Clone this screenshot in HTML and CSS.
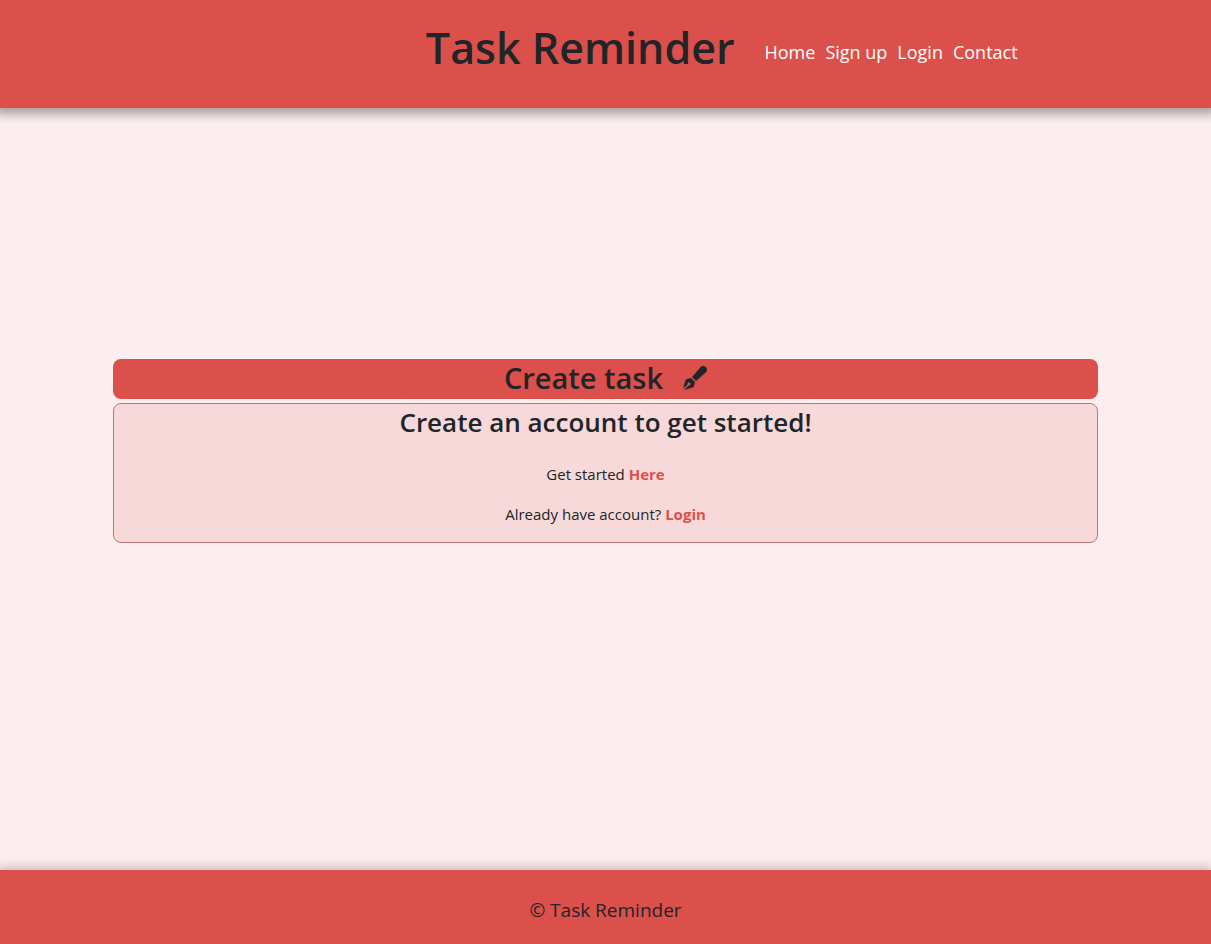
FILE: index.html
```html
<!DOCTYPE html>
<html lang="en">
<head>
<meta charset="utf-8">
<title>Task Reminder</title>
<link rel="stylesheet" href="styles.css">
</head>
<body>
<header class="site-header">
  <h1 class="site-title">Task Reminder</h1>
  <nav class="site-nav">
    <a href="#home">Home</a>
    <a href="#signup">Sign up</a>
    <a href="#login">Login</a>
    <a href="#contact">Contact</a>
  </nav>
</header>
<main class="content">
  <h2 class="task-heading">Create task
    <svg class="pen" viewBox="0 0 512 512" aria-hidden="true"><path fill="currentColor" d="M373.5 27.1C388.5 9.9 410.2 0 433 0c43.6 0 79 35.4 79 79c0 22.8-9.9 44.6-27.1 59.6L277.7 319l-10.3-10.3-64-64L193 234.3 373.5 27.1zM170.3 256.9l10.4 10.4 64 64 10.4 10.4-19.2 83.4c-3.9 17.1-16.9 30.7-33.8 35.4L24.4 510.3l95.4-95.4c2.6 .7 5.4 1.1 8.3 1.1c17.7 0 32-14.3 32-32s-14.3-32-32-32s-32 14.3-32 32c0 2.9 .4 5.6 1.1 8.3L1.7 487.6 51.5 310c4.7-16.9 18.3-29.9 35.4-33.8l83.4-19.2z"/></svg>
  </h2>
  <section class="card">
    <h3 class="card-title">Create an account to get started!</h3>
    <p class="card-text">Get started <a class="accent" href="#signup">Here</a></p>
    <p class="card-text">Already have account? <a class="accent" href="#login">Login</a></p>
  </section>
</main>
<footer class="site-footer">
  <p class="copyright">© Task Reminder</p>
</footer>
</body>
</html>
```
FILE: styles.css
```css
* { box-sizing: border-box; }

body {
  margin: 0;
  min-height: 100vh;
  display: flex;
  flex-direction: column;
  background: #fceeee;
  color: #212529;
  font: 400 15px/24px "Segoe UI", "Open Sans", "Noto Sans", sans-serif;
}

h1, h2, h3, p { margin: 0; }

a { text-decoration: none; }

.site-header {
  display: flex;
  gap: 30px;
  padding: 19px 0 31px 35%;
  background: #db504a;
  box-shadow: 0 0 10px 6px rgba(0, 0, 0, 0.34);
}

.site-title {
  padding-left: 2px;
  font-size: 43px;
  font-weight: 600;
  line-height: 58px;
}

.site-nav {
  display: flex;
  align-items: center;
  gap: 10px;
  padding-top: 8px;
  font-size: 18px;
}

.site-nav a { color: #fff; }

.content {
  flex: 1;
  display: flex;
  flex-direction: column;
  justify-content: center;
  gap: 4px;
  padding: 0 113px 76px;
  text-align: center;
}

.task-heading {
  display: flex;
  justify-content: center;
  align-items: center;
  gap: 20px;
  height: 40px;
  padding-bottom: 2px;
  border-radius: 8px;
  background: #db504a;
  font-size: 29px;
  font-weight: 600;
  line-height: 36px;
}

.pen {
  width: 24px;
  height: 24px;
}

.card {
  padding: 2px 0 16px;
  border: 1px solid #b97676;
  border-radius: 8px;
  background: #f7d9d9;
}

.card-title {
  margin-bottom: 23px;
  font-size: 26px;
  font-weight: 600;
  line-height: 33px;
}

.card-text + .card-text { margin-top: 16px; }

.accent {
  color: #db504a;
  font-weight: 700;
}

.site-footer {
  padding: 25px 0 19px;
  background: #db504a;
  box-shadow: 0 3px 12px 3px rgba(0, 0, 0, 0.34);
  text-align: center;
}

.copyright {
  font-size: 19px;
  line-height: 30px;
}
```
